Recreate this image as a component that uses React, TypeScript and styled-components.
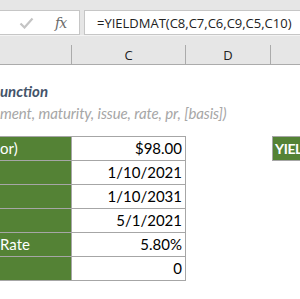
import styled, { createGlobalStyle } from 'styled-components'

const GlobalStyle = createGlobalStyle`
  html, body {
    margin: 0;
    padding: 0;
    background: #ffffff;
    overflow: hidden;
  }
`

const Sheet = styled.div`
  width: 300px;
  height: 299px;
  overflow: hidden;
  background: #ffffff;
  font-family: Lato, 'Liberation Sans', sans-serif;
`

const Toolbar = styled.div`
  display: flex;
  gap: 4px;
  height: 36px;
  padding-top: 10px;
  box-sizing: border-box;
  background: #e6e6e6;
  border-bottom: 1px solid #f3f3f3;
`

const NameBox = styled.div`
  display: flex;
  align-items: center;
  width: 80px;
  height: 25px;
  box-sizing: border-box;
  background: #ffffff;
  border: 1px solid #c6c6c6;
  border-left: none;
  padding-left: 19px;
  gap: 21px;
`

const FxLabel = styled.span`
  font-family: 'DejaVu Serif', 'Liberation Serif', serif;
  font-style: italic;
  font-size: 14px;
  color: #6a6a6a;
  letter-spacing: -1px;
`

const FormulaBox = styled.div`
  flex: 1;
  height: 25px;
  box-sizing: border-box;
  background: #ffffff;
  border: 1px solid #c6c6c6;
  border-right: none;
  padding-left: 12px;
  display: flex;
  align-items: center;
  font-family: 'Open Sans', sans-serif;
  font-size: 13px;
  color: #222222;
  white-space: nowrap;
`

const HeaderRow = styled.div`
  display: grid;
  grid-template-columns: 72px 114px 85px 1fr;
  height: 29px;
  background: #e6e6e6;
  border-bottom: 1px solid #ababab;
  box-sizing: border-box;
`

const HeaderCell = styled.div<{ $divider?: boolean }>`
  display: flex;
  align-items: center;
  justify-content: center;
  margin-top: 9px;
  font-family: 'Open Sans', sans-serif;
  font-size: 13px;
  color: #222222;
  border-right: ${(p) => (p.$divider ? '1px solid #ababab' : 'none')};
`

const Body = styled.div`
  padding-top: 17px;
`

const Title = styled.div`
  height: 20px;
  font-size: 15px;
  font-weight: 700;
  font-style: italic;
  color: #44546a;
  white-space: nowrap;
`

const Subtitle = styled.div`
  height: 20px;
  font-size: 15px;
  font-style: italic;
  color: #a6a6a6;
  white-space: nowrap;
  margin-top: 2px;
  letter-spacing: -0.1px;
`

const Table = styled.div`
  display: flex;
  flex-direction: column;
  margin-top: 12px;
  border-top: 1px solid #a6a6a6;
  width: 186px;
  overflow: visible;
`

const Row = styled.div`
  display: grid;
  grid-template-columns: 72px 114px 86px 28px;
  height: 24px;
`

const Cell = styled.div`
  display: flex;
  align-items: flex-end;
  font-size: 15px;
  box-sizing: border-box;
  border-bottom: 1px solid #a6a6a6;
  border-right: 1px solid #a6a6a6;
  white-space: nowrap;
  overflow: hidden;
`

const Label = styled(Cell)`
  background: #548235;
  color: #ffffff;
  padding-bottom: 3px;
`

const Value = styled(Cell)`
  background: #ffffff;
  color: #000000;
  justify-content: flex-end;
  padding: 0 3px 3px 0;
`

const Spacer = styled.div``

const ResultLabel = styled.div`
  background: #548235;
  color: #ffffff;
  font-weight: 700;
  font-size: 14px;
  letter-spacing: -0.4px;
  display: flex;
  align-items: flex-end;
  padding: 0 0 3px 2px;
  margin-top: -1px;
  box-sizing: border-box;
  border: 1px solid #a6a6a6;
  border-right: none;
  white-space: nowrap;
  overflow: hidden;
`

const Check = () => (
  <svg width="15" height="12" viewBox="0 0 15 12">
    <path d="M1.5 6.5 L5.5 10.5 L13.5 1.5" fill="none" stroke="#c4c4c4" strokeWidth="2.2" />
  </svg>
)

const rows = [
  { label: 'or)', value: '$98.00' },
  { label: '', value: '1/10/2021' },
  { label: '', value: '1/10/2031' },
  { label: '', value: '5/1/2021' },
  { label: 'Rate', value: '5.80%' },
  { label: '', value: '0' },
]

export default function App() {
  return (
    <Sheet>
      <GlobalStyle />
      <Toolbar>
        <NameBox>
          <Check />
          <FxLabel>fx</FxLabel>
        </NameBox>
        <FormulaBox>=YIELDMAT(C8,C7,C6,C9,C5,C10)</FormulaBox>
      </Toolbar>
      <HeaderRow>
        <HeaderCell $divider />
        <HeaderCell $divider>C</HeaderCell>
        <HeaderCell $divider>D</HeaderCell>
        <HeaderCell />
      </HeaderRow>
      <Body>
        <Title>unction</Title>
        <Subtitle>ment, maturity, issue, rate, pr, [basis])</Subtitle>
        <Table>
          {rows.map((r, i) => (
            <Row key={i}>
              <Label>{r.label}</Label>
              <Value>{r.value}</Value>
              {i === 0 && (
                <>
                  <Spacer />
                  <ResultLabel>YIEL</ResultLabel>
                </>
              )}
            </Row>
          ))}
        </Table>
      </Body>
    </Sheet>
  )
}
